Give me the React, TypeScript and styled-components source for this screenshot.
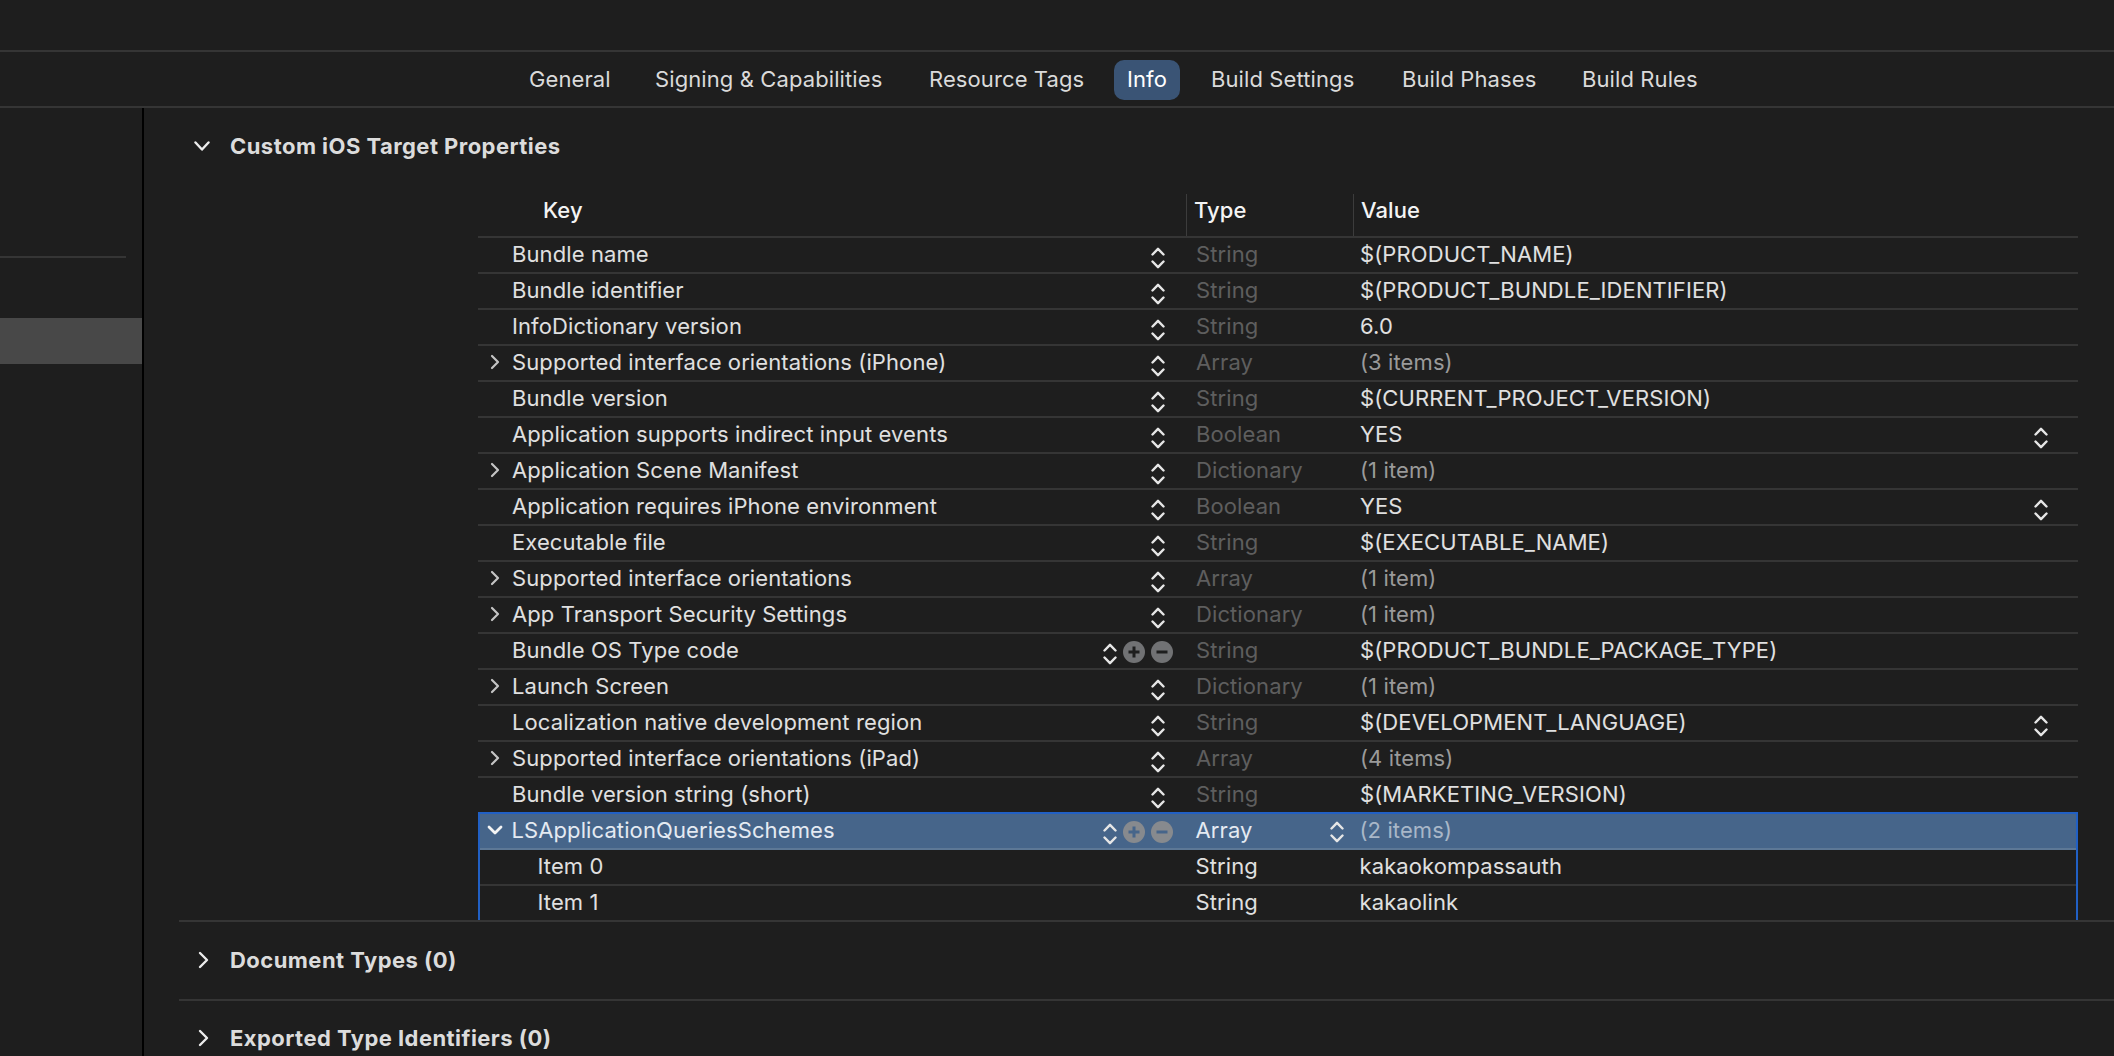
import React from "react";
import styled, { createGlobalStyle } from "styled-components";

const Global = createGlobalStyle`
  html, body { margin: 0; padding: 0; background: #1e1e1e; overflow: hidden; }
  #root { height: 1056px; }
  * { box-sizing: border-box; }
`;

const Window = styled.div`
  width: 2114px; height: 1056px; overflow: hidden; background: #1e1e1e; color: #e0e0e0;
  font-family: Inter, "Liberation Sans", sans-serif; font-size: 22px; letter-spacing: 0.1px;
  display: flex; flex-direction: column;
`;
const TitleBar = styled.div`height: 52px; border-bottom: 2px solid #353535; flex: none;`;
const TabBar = styled.nav`
  height: 56px; flex: none; border-bottom: 2px solid #353535; padding-top: 2px;
  display: flex; align-items: center; padding-left: 529px; color: #dadada;
`;
const Tab = styled.span<{ $active?: boolean; $w: number }>`
  width: ${(p) => p.$w}px; height: 40px; flex: none; white-space: nowrap; line-height: 38px;
  ${(p) => (p.$active ? `background:#3a5475;border-radius:10px;color:#fff;text-align:center;` : "")}
`;
const Body = styled.div`flex: 1; display: flex; min-height: 0;`;
const Sidebar = styled.aside`
  width: 144px; flex: none; border-right: 2px solid #000; padding-top: 148px;
`;
const SideRule = styled.div`height: 2px; width: 126px; background: #353535;`;
const SideSelected = styled.div`height: 46px; margin-top: 60px; background: #484848;`;
const Content = styled.main`flex: 1; padding-left: 35px; min-width: 0;`;
const SectionHead = styled.div<{ $h: number; $lift?: number }>`
  height: ${(p) => p.$h}px; display: flex; align-items: center; padding-left: 15px; gap: 20px;
  padding-bottom: ${(p) => p.$lift || 0}px;
  font-weight: 700; color: #dcdcdc; letter-spacing: 0.45px;
`;
const Chevron = styled.svg`flex: none; display: block;`;
const Table = styled.div`margin-left: 299px; width: 1600px; height: 736px; overflow: hidden;`;
const grid = `display:grid;grid-template-columns:708px 167px 1fr;`;
const Header = styled.div`
  ${grid} height: 54px; border-bottom: 2px solid #353535; font-weight: 500; color: #f4f4f4; padding-top: 10px;
`;
const HeadCell = styled.div<{ $first?: boolean }>`
  display: flex; align-items: center; height: 42px; padding: 0 0 10px ${(p) => (p.$first ? 65 : 7)}px;
  ${(p) => (p.$first ? "" : "border-left: 1.5px solid #3c3c3c;")}
`;
const Row = styled.div<{ $sel?: boolean }>`
  ${grid} height: 36px; border-bottom: 2px solid ${(p) => (p.$sel ? "#5d7896" : "#353535")};
  background: ${(p) => (p.$sel ? "#46658a" : "transparent")};
  color: ${(p) => (p.$sel ? "#e4eaf2" : "#e0e0e0")}; align-items: center;
`;
const Group = styled.div`
  border: 3px solid #2160c4; border-width: 2.5px 2.5px 0; margin-top: -2px; height: 108px; overflow: hidden;
  & > ${Row} { margin: 0 -2.5px; }
`;
const KeyCell = styled.div<{ $indent: number; $right: number }>`
  display: flex; align-items: center; padding: 0 ${(p) => p.$right}px 2px ${(p) => p.$indent}px;
  position: relative; height: 34px;
`;
const Name = styled.span`flex: 1; white-space: nowrap;`;
const Disclosure = styled.svg`position: absolute; left: 9px; top: 8px;`;
const TypeCell = styled.div<{ $muted?: boolean }>`
  display: flex; align-items: center; justify-content: space-between; padding: 0 9px 2px 10px;
  color: ${(p) => (p.$muted ? "#5e5e5e" : "inherit")}; height: 34px;
`;
const ValueCell = styled.div<{ $tone?: string }>`
  display: flex; align-items: center; justify-content: space-between; padding: 0 30px 2px 7px;
  color: ${(p) => p.$tone || "inherit"}; height: 34px;
`;
const RoundButton = styled.span<{ $sel?: boolean }>`
  width: 22px; height: 22px; border-radius: 50%; margin: 4px 0 0 6px; flex: none;
  background: ${(p) => (p.$sel ? "#878a8e" : "#717274")};
  display: flex; align-items: center; justify-content: center;
`;
const Controls = styled.div`display: flex; align-items: center; margin-left: 10px;`;
const StepperSvg = styled.svg<{ $dy: number }>`flex: none; display: block; margin-top: ${(p) => p.$dy}px;`;
const Divider = styled.div`height: 2px; background: #353535;`;

const Stepper = ({ dy = 7 }: { dy?: number }) => (
  <StepperSvg $dy={dy} width="14" height="22" viewBox="0 0 14 22" fill="none" stroke="#e6e6e6" strokeWidth="2.4" strokeLinecap="round" strokeLinejoin="round">
    <path d="M1.5 7.5 7 1.8 12.5 7.5" />
    <path d="M1.5 14.5 7 20.2 12.5 14.5" />
  </StepperSvg>
);
const Down = () => (
  <Chevron width="16" height="16" viewBox="0 0 16 16" fill="none" stroke="#ececec" strokeWidth="2.4" strokeLinecap="round" strokeLinejoin="round">
    <path d="M1.5 4.5 8 11.5 14.5 4.5" />
  </Chevron>
);
const Right = () => (
  <Chevron width="16" height="18" viewBox="0 0 16 18" fill="none" stroke="#ececec" strokeWidth="2.4" strokeLinecap="round" strokeLinejoin="round">
    <path d="M6 2 13 9 6 16" />
  </Chevron>
);

type R = { k: string; t: string; v: string; d?: boolean; adds?: boolean; vs?: boolean };
const rows: R[] = [
  { k: "Bundle name", t: "String", v: "$(PRODUCT_NAME)" },
  { k: "Bundle identifier", t: "String", v: "$(PRODUCT_BUNDLE_IDENTIFIER)" },
  { k: "InfoDictionary version", t: "String", v: "6.0" },
  { k: "Supported interface orientations (iPhone)", t: "Array", v: "(3 items)", d: true },
  { k: "Bundle version", t: "String", v: "$(CURRENT_PROJECT_VERSION)" },
  { k: "Application supports indirect input events", t: "Boolean", v: "YES", vs: true },
  { k: "Application Scene Manifest", t: "Dictionary", v: "(1 item)", d: true },
  { k: "Application requires iPhone environment", t: "Boolean", v: "YES", vs: true },
  { k: "Executable file", t: "String", v: "$(EXECUTABLE_NAME)" },
  { k: "Supported interface orientations", t: "Array", v: "(1 item)", d: true },
  { k: "App Transport Security Settings", t: "Dictionary", v: "(1 item)", d: true },
  { k: "Bundle OS Type code", t: "String", v: "$(PRODUCT_BUNDLE_PACKAGE_TYPE)", adds: true },
  { k: "Launch Screen", t: "Dictionary", v: "(1 item)", d: true },
  { k: "Localization native development region", t: "String", v: "$(DEVELOPMENT_LANGUAGE)", vs: true },
  { k: "Supported interface orientations (iPad)", t: "Array", v: "(4 items)", d: true },
  { k: "Bundle version string (short)", t: "String", v: "$(MARKETING_VERSION)" },
];

const Plus = ({ sel }: { sel?: boolean }) => (
  <RoundButton $sel={sel}>
    <svg width="14" height="14" viewBox="0 0 14 14" fill="none" stroke={sel ? "#46658a" : "#1e1e1e"} strokeWidth="3"><path d="M7 1.5v11M1.5 7h11" /></svg>
  </RoundButton>
);
const Minus = ({ sel }: { sel?: boolean }) => (
  <RoundButton $sel={sel}>
    <svg width="14" height="14" viewBox="0 0 14 14" fill="none" stroke={sel ? "#46658a" : "#1e1e1e"} strokeWidth="3"><path d="M1.5 7h11" /></svg>
  </RoundButton>
);

export default function App() {
  return (
    <Window>
      <Global />
      <TitleBar />
      <TabBar>
        <Tab $w={126}>General</Tab>
        <Tab $w={274}>Signing &amp; Capabilities</Tab>
        <Tab $w={185}>Resource Tags</Tab>
        <Tab $w={66} $active>Info</Tab>
        <Tab $w={31} />
        <Tab $w={191}>Build Settings</Tab>
        <Tab $w={180}>Build Phases</Tab>
        <Tab $w={120}>Build Rules</Tab>
      </TabBar>
      <Body>
        <Sidebar>
          <SideRule />
          <SideSelected />
        </Sidebar>
        <Content>
          <SectionHead $h={76}><Down />Custom iOS Target Properties</SectionHead>
          <Table>
            <Header>
              <HeadCell $first>Key</HeadCell>
              <HeadCell>Type</HeadCell>
              <HeadCell>Value</HeadCell>
            </Header>
            {rows.map((r) => (
              <Row key={r.k}>
                <KeyCell $indent={34} $right={r.adds ? 13 : 21}>
                  {r.d && (
                    <Disclosure width="16" height="16" viewBox="0 0 16 16" fill="none" stroke="#c4c4c4" strokeWidth="2.2" strokeLinecap="round" strokeLinejoin="round">
                      <path d="M5 2l6 6-6 6" />
                    </Disclosure>
                  )}
                  <Name>{r.k}</Name>
                  {r.adds ? <Controls><Stepper /><Plus /><Minus /></Controls> : <Stepper />}
                </KeyCell>
                <TypeCell $muted>{r.t}</TypeCell>
                <ValueCell $tone={r.v.startsWith("(") ? "#9a9a9a" : undefined}>
                  <span>{r.v}</span>
                  {r.vs && <Stepper />}
                </ValueCell>
              </Row>
            ))}
            <Group>
              <Row $sel>
                <KeyCell $indent={34} $right={13}>
                  <Disclosure width="16" height="16" viewBox="0 0 16 16" fill="none" stroke="#f4f4f4" strokeWidth="2.8" strokeLinecap="round" strokeLinejoin="round">
                    <path d="M2 5l6 6 6-6" />
                  </Disclosure>
                  <Name>LSApplicationQueriesSchemes</Name>
                  <Controls><Stepper /><Plus sel /><Minus sel /></Controls>
                </KeyCell>
                <TypeCell>Array<Stepper dy={4} /></TypeCell>
                <ValueCell $tone="#a9b7c8"><span>(2 items)</span></ValueCell>
              </Row>
              <Row>
                <KeyCell $indent={60} $right={21}><Name>Item 0</Name></KeyCell>
                <TypeCell>String</TypeCell>
                <ValueCell>kakaokompassauth</ValueCell>
              </Row>
              <Row>
                <KeyCell $indent={60} $right={21}><Name>Item 1</Name></KeyCell>
                <TypeCell>String</TypeCell>
                <ValueCell>kakaolink</ValueCell>
              </Row>
            </Group>
          </Table>
          <Divider />
          <SectionHead $h={77} $lift={2}><Right />Document Types (0)</SectionHead>
          <Divider />
          <SectionHead $h={77} $lift={4}><Right />Exported Type Identifiers (0)</SectionHead>
        </Content>
      </Body>
    </Window>
  );
}
